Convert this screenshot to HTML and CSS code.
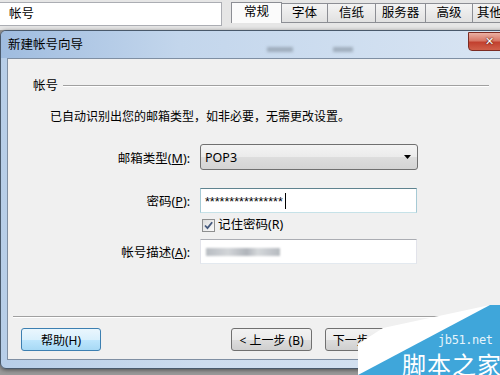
FILE: index.html
```html
<!DOCTYPE html>
<html lang="zh-CN">
<head>
    <meta charset="UTF-8">
    <title>新建帐号向导</title>
    <link rel="stylesheet" href="styles.css">
</head>
<body>
    <div class="app">
        <!-- main window behind the dialog -->
        <div class="topbar">
            <div class="field">帐号</div>
            <ul class="tabs">
                <li class="tab active">常规</li>
                <li class="tab w46">字体</li>
                <li class="tab">信纸</li>
                <li class="tab w50">服务器</li>
                <li class="tab w47">高级</li>
                <li class="tab last">其他</li>
            </ul>
        </div>

        <div class="dialog">
            <div class="titlebar">
                <span class="title">新建帐号向导</span>
                <span class="smudge s1"></span>
                <span class="smudge s2"></span>
                <span class="close">&#x2715;</span>
            </div>

            <div class="client">
                <div class="group">
                    <span>帐号</span>
                    <i class="rule"></i>
                </div>
                <p class="hint">已自动识别出您的邮箱类型，如非必要，无需更改设置。</p>

                <div class="row r1">
                    <label>邮箱类型(<u>M</u>):</label>
                    <div class="select">
                        <span>POP3</span>
                        <svg width="7" height="4" viewBox="0 0 7 4"><path d="M0 0h7L3.5 4z" fill="#000"/></svg>
                    </div>
                </div>
                <div class="row r2">
                    <label>密码(<u>P</u>):</label>
                    <div class="input focus"><span class="stars">****************</span><span class="caret"></span></div>
                </div>
                <div class="row r3">
                    <span class="box">
                        <svg width="11" height="11" viewBox="0 0 11 11"><path d="M2 5.5l2.5 2.6L9.2 2.2" fill="none" stroke="#45597d" stroke-width="1.8"/></svg>
                    </span>
                    <span class="check-label">记住密码(R)</span>
                </div>
                <div class="row r4">
                    <label>帐号描述(<u>A</u>):</label>
                    <div class="input"><span class="smudge s3"></span></div>
                </div>

                <div class="footer">
                    <div class="sep"></div>
                    <div class="buttons">
                        <button class="btn hot">帮助(H)</button>
                        <div class="nav">
                            <button class="btn">&lt; 上一步 (B)</button>
                            <button class="btn">下一步 (N) &gt;</button>
                        </div>
                    </div>
                </div>
            </div>
        </div>

        <!-- site watermark over the corner -->
        <div class="watermark">
            <svg width="170" height="70" viewBox="0 0 170 70">
                <polygon points="160,0 53,23 28,39 28,70 170,70 170,0" fill="#fff"/>
                <polygon points="28,70 160,0 170,0 170,70" fill="#3fa6da"/>
            </svg>
            <span class="wm-url">jb51.net</span>
            <span class="wm-name">脚本之家</span>
        </div>
    </div>
</body>
</html>
```

FILE: styles.css
```css
html, body {
    margin: 0;
    padding: 0;
}

body {
    width: 500px;
    height: 375px;
    overflow: hidden;
    background: #8c8c8c;
    font-family: "Noto Sans", "Noto Sans CJK SC", sans-serif;
    font-size: 12px;
    color: #000;
}

.app {
    position: relative;
    width: 500px;
    height: 375px;
    overflow: hidden;
    background: #9a9a9a;
}

/* ---- main window strip ---- */
.topbar {
    height: 30px;
    display: flex;
    align-items: flex-start;
    background: #e6e6e6;
}

.field {
    box-sizing: border-box;
    flex-shrink: 0;
    width: 222px;
    height: 24px;
    margin-top: 2px;
    padding-left: 9px;
    line-height: 22px;
    font-size: 12.5px;
    background: #fff;
    border: 1px solid #abadb3;
    border-left: none;
}

.tabs {
    display: flex;
    flex-shrink: 0;
    list-style: none;
    margin: 3px 0 0 9px;
    padding: 0;
}

.tab {
    box-sizing: border-box;
    flex-shrink: 0;
    width: 48px;
    height: 20px;
    line-height: 18px;
    text-align: center;
    font-size: 12.5px;
    border: 1px solid #8c8e94;
    border-left: none;
    background: linear-gradient(#f4f4f4, #e1e1e1);
}

.tab.active {
    width: 51px;
    height: 21px;
    margin-top: -1px;
    border-left: 1px solid #8c8e94;
    border-bottom: none;
    background: #fbfbfb;
}

.tab.w46 { width: 46px; }
.tab.w47 { width: 47px; }
.tab.w50 { width: 50px; }

.tab.last {
    text-align: left;
    padding-left: 4px;
}

/* ---- dialog ---- */
.dialog {
    box-sizing: border-box;
    width: 512px;
    height: 339px;
    padding: 0 6px 8px 6px;
    border: 1px solid #49596b;
    border-radius: 6px;
    background: linear-gradient(90deg, #b7cee8, #cddcee 40%, #d6e3f2);
    box-shadow: 0 1px 4px rgba(0, 0, 0, 0.5);
}

.titlebar {
    height: 27px;
    display: flex;
    align-items: center;
    background: linear-gradient(90deg, #9fbcdf, #c3d6ec 35%, #d9e5f3);
    margin: 0 -6px;
    padding: 0 0 0 7px;
    border-radius: 5px 5px 0 0;
}

.title {
    font-size: 12.5px;
    line-height: 16px;
    margin-top: 1px;
}

.smudge {
    display: inline-block;
    background: #8d9aa8;
    filter: blur(1.6px);
    opacity: 0.7;
}

.titlebar .s1 {
    width: 26px;
    height: 5px;
    margin: 10px 0 0 184px;
}

.titlebar .s2 {
    width: 20px;
    height: 5px;
    margin: 10px 0 0 40px;
}

.close {
    box-sizing: border-box;
    align-self: flex-start;
    width: 43px;
    height: 19px;
    margin: 1px 0 0 auto;
    line-height: 17px;
    text-align: center;
    font-family: "DejaVu Sans", sans-serif;
    font-size: 11px;
    font-weight: bold;
    color: #fff;
    text-shadow: 0 0 2px #5b1a12, 0 0 1px #5b1a12;
    background: linear-gradient(#eab0a3, #d77766 45%, #c2402f 55%, #d0604a);
    border: 1px solid #7b2b23;
    border-radius: 0 0 4px 4px;
}

.client {
    box-sizing: border-box;
    height: 302px;
    display: flex;
    flex-direction: column;
    background: #f0f0f0;
    border: 1px solid #7f8fa3;
}

.group {
    display: flex;
    align-items: center;
    margin: 20px 15px 0 25px;
    height: 14px;
    line-height: 14px;
    font-size: 12.5px;
}

.rule {
    flex: 1;
    height: 0;
    margin: 0 0 0 5px;
    border-top: 1px solid #a0a0a0;
    border-bottom: 1px solid #fff;
}

.hint {
    margin: 16px 0 0 42px;
    line-height: 16px;
}

.row {
    display: flex;
    align-items: center;
}

.row label {
    width: 182px;
    margin-right: 10px;
    text-align: right;
    font-size: 12.5px;
}

.row label u {
    text-decoration: underline;
    text-underline-offset: 1px;
}

.r1 { margin-top: 19px; }
.r2 { margin-top: 18px; }
.r3 { margin-top: 5px; padding-left: 194px; }
.r4 { margin-top: 7px; }

.select {
    box-sizing: border-box;
    width: 218px;
    height: 26px;
    display: flex;
    align-items: center;
    justify-content: space-between;
    padding: 0 6px 0 4px;
    font-size: 12.5px;
    border: 1px solid #707070;
    border-radius: 3px;
    background: linear-gradient(#f4f4f4, #ebebeb 50%, #dddddd 51%, #d4d4d4);
}

.input {
    box-sizing: border-box;
    width: 217px;
    height: 25px;
    display: flex;
    align-items: center;
    padding-left: 4px;
    background: #fff;
    border: 1px solid;
    border-color: #abadb3 #e2e3ea #e3e9ef #e2e3ea;
}

.input.focus {
    border-color: #5f838f #a6cad5 #c6e2e8 #a6cad5;
}

.stars {
    font-family: "Liberation Sans", sans-serif;
    font-size: 12.5px;
    line-height: 14px;
    padding-top: 3px;
}

.caret {
    width: 1px;
    height: 16px;
    margin-left: 2px;
    background: #000;
}

.input .s3 {
    width: 74px;
    height: 8px;
    margin-left: 1px;
    background: linear-gradient(90deg, #9aa0a8, #c0c4c9 30%, #8f959e 55%, #c4c8cc 70%, #979da5);
    filter: blur(1px);
}

.box {
    box-sizing: border-box;
    width: 13px;
    height: 13px;
    display: flex;
    align-items: center;
    justify-content: center;
    border: 1px solid #8e8f8f;
    background: linear-gradient(135deg, #dcdcdc, #fafafa);
}

.check-label {
    margin-left: 3px;
    font-size: 12.5px;
    line-height: 14px;
}

.footer {
    margin-top: auto;
    padding-bottom: 8px;
}

.sep {
    margin: 0 13px 10px 5px;
    border-top: 1px solid #a0a0a0;
    border-bottom: 1px solid #fff;
}

.buttons {
    display: flex;
    padding: 0 0 0 13px;
}

.nav {
    display: flex;
    gap: 13px;
    margin-left: 130px;
}

.btn {
    box-sizing: border-box;
    width: 81px;
    height: 23px;
    padding: 0;
    font-family: "Noto Sans", "Noto Sans CJK SC", sans-serif;
    font-size: 12px;
    color: #000;
    border: 1px solid #707070;
    border-radius: 3px;
    background: linear-gradient(#f2f2f2, #ebebeb 50%, #dddddd 51%, #cfcfcf);
}

.btn.hot {
    width: 80px;
    border-color: #3c7fb1;
    background: linear-gradient(#eaf6fd, #d9f0fc 50%, #bee6fd 51%, #a7d9f5);
}

/* ---- watermark ---- */
.watermark {
    position: absolute;
    left: 330px;
    top: 305px;
    width: 170px;
    height: 70px;
}

.watermark svg {
    display: block;
}

.wm-url {
    position: absolute;
    left: 108px;
    top: 29px;
    font-family: "DejaVu Sans Mono", monospace;
    font-size: 12px;
    line-height: 12px;
    letter-spacing: -0.4px;
    color: #e6f4fb;
}

.wm-name {
    position: absolute;
    left: 72px;
    top: 46px;
    font-family: "Noto Sans CJK SC", sans-serif;
    font-size: 24px;
    line-height: 26px;
    letter-spacing: 1px;
    color: #fff;
    white-space: nowrap;
}
```
